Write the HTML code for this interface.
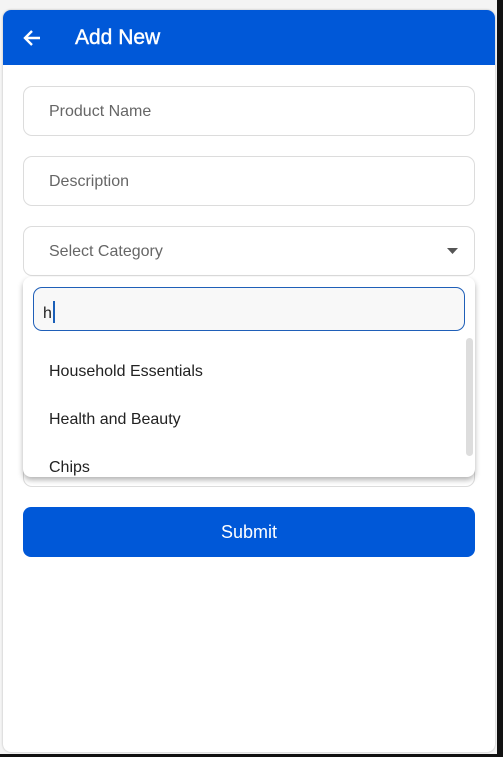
<!DOCTYPE html>
<html><head><style>
*{box-sizing:border-box;margin:0;padding:0}
body{width:503px;height:757px;background:#111;position:relative;overflow:hidden;font-family:"Liberation Sans",Roboto,sans-serif}
.bg{position:absolute;left:0;top:0;width:497px;height:754px;background:#f4f4f4}
.card{position:absolute;left:3px;top:10px;width:492px;height:742px;background:#fff;border-radius:8px;box-shadow:0 0 2px rgba(0,0,0,.25);overflow:hidden}
.hdr{position:absolute;left:0;top:0;width:492px;height:55px;background:#0058d8;color:#fff}
.hdr .t{position:absolute;left:72px;top:16px;font-size:21px;-webkit-text-stroke:0.4px #fff}
.hdr svg{position:absolute;left:19px;top:19px}
.f{position:absolute;left:23px;width:452px;height:50px;border:1px solid #dcdcdc;border-radius:9px;background:#fff;font-size:16px;color:#666;padding:16px 25px}
.dd{position:absolute;left:23px;top:277px;width:452px;height:200px;background:#fff;border-radius:8px;box-shadow:0 3px 6px rgba(0,0,0,.3)}
.s{position:absolute;left:10px;top:10px;width:432px;height:44px;border:1px solid #1f5fb8;border-radius:9px;background:#f8f8f8;font-size:16px;color:#222;padding:13px 9px}
.cur{display:inline-block;width:2px;height:22px;background:#1a5fb8;vertical-align:-5px;margin-left:1px}
.it{position:absolute;left:26px;font-size:16px;color:#222}
.sb{position:absolute;left:443px;top:61px;width:7px;height:118px;background:#ddd;border-radius:4px}
.btn{position:absolute;left:23px;top:507px;width:452px;height:50px;background:#0058d8;border-radius:8px;color:#fff;font-size:18px;text-align:center;line-height:50px}
</style></head><body>
<div class="bg"></div>
<div class="card"><div class="hdr"><svg width="20" height="18" viewBox="0 0 20 18"><path d="M18 9H3M10 2L3 9l7 7" stroke="#fff" stroke-width="2.4" fill="none"/></svg><div class="t">Add New</div></div></div>
<div class="f" style="top:86px">Product Name</div>
<div class="f" style="top:156px">Description</div>
<div class="f" style="top:437px;height:50px"></div>
<div class="f" style="top:226px">Select Category<svg style="position:absolute;right:16px;top:21px" width="11" height="6"><path d="M0 0h11L5.5 6z" fill="#555"/></svg></div>
<div class="dd">
<div class="s">h<span class="cur"></span></div>
<div class="it" style="top:86px">Household Essentials</div>
<div class="it" style="top:134px">Health and Beauty</div>
<div class="it" style="top:182px">Chips</div>
<div class="sb"></div>
</div>
<div class="btn">Submit</div>
</body></html>
